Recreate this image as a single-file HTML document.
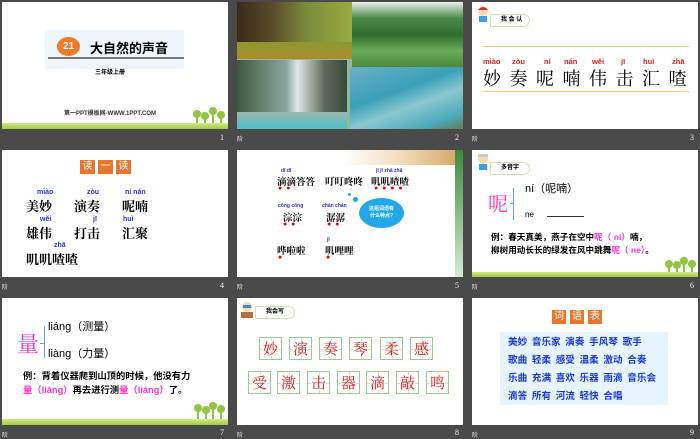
<!DOCTYPE html>
<html><head><meta charset="utf-8"><style>
*{margin:0;padding:0;box-sizing:border-box}
body{width:700px;height:438px;background:#4a4a4a;position:relative;overflow:hidden;font-family:"Liberation Sans","Noto Sans CJK SC",sans-serif}
.s{position:absolute;width:226px;height:127px;background:#fff;overflow:hidden}
.a{position:absolute;white-space:nowrap}
.n{position:absolute;color:#eee;font-size:8px;font-family:"Liberation Serif",serif}
.k{font-family:"Noto Serif CJK SC","Noto Sans CJK SC",serif;font-weight:bold}
.py{color:#2233dd;font-size:7px;font-weight:bold}
.ob{position:absolute;background:#e8762c;color:#fff;font-size:10px;text-align:center;width:15px;height:14px;line-height:14px}
.bar{position:absolute;left:0;bottom:0;width:226px;height:6px;background:linear-gradient(#d6e98e,#9ccc3c)}
.tr{position:absolute;width:2px;background:#8dc63f}
.tr:before{content:"";position:absolute;left:-3px;top:-5px;width:8px;height:8px;border-radius:50%;background:#8dc63f}
.bd{position:absolute;height:13px;background:#fff;border:1px solid #cfe3b3;border-radius:0 7px 7px 0;font-size:6px;font-weight:bold;line-height:11px;padding-left:10px;width:40px}
.kid{position:absolute;width:14px;height:18px}
.box{position:absolute;width:23px;height:23px;border:1px solid #9acb8c;background:#fff;color:#e31b1b;font-size:15px;text-align:center;line-height:21px;font-family:"Noto Serif CJK SC",serif}
.box:before{content:"";position:absolute;left:50%;top:0;bottom:0;border-left:1px dashed #cde4c5}
.box:after{content:"";position:absolute;top:50%;left:0;right:0;border-top:1px dashed #cde4c5}
.box span{position:relative;z-index:1}
.dot{color:#e00;font-size:7px}
</style></head><body>

<!-- slide 1 -->
<div class="s" style="left:2px;top:2px">
<div class="a" style="left:43px;top:28px;width:139px;height:39px;background:#eef5fb"></div>
<div class="a" style="left:55px;top:35px;width:23px;height:19px;border-radius:50%;background:#ee7a2a;color:#fff;font-size:10px;font-weight:bold;text-align:center;line-height:19px">21</div>
<div class="a" style="left:88px;top:36px;font-size:13px;font-weight:bold">大自然的声音</div>
<div class="a" style="left:46px;top:55px;width:136px;height:2px;background:#777"></div>
<div class="a" style="left:93px;top:65px;font-size:6px;font-weight:bold">三年级上册</div>
<div class="a" style="left:62px;top:106px;font-size:6px;font-weight:bold;color:#333">第一PPT模板网-WWW.1PPT.COM</div>
<div class="tr" style="left:194px;top:113px;height:9px"></div><div class="tr" style="left:202px;top:115px;height:8px"></div><div class="tr" style="left:210px;top:110px;height:12px"></div><div class="tr" style="left:218px;top:114px;height:9px"></div>
<div class="bar"></div>
</div>
<div class="n" style="left:220px;top:133px">1</div>

<!-- slide 2 -->
<div class="s" style="left:237px;top:2px;background:#8fb8a0">
<div class="a" style="left:0;top:0;width:115px;height:57px;background:linear-gradient(90deg,#3a2a18 0%,#5a4a2a 30%,#7a8a3a 60%,#9aaa40 100%)"></div>
<div class="a" style="left:0;top:40px;width:115px;height:17px;background:linear-gradient(#8a9a30,#b08a2a)"></div>
<div class="a" style="left:0;top:58px;width:110px;height:69px;background:linear-gradient(90deg,#3c5a3a,#8aa8a0 45%,#dfe8e8 55%,#5a6a58 80%,#3a4a3a)"></div>
<div class="a" style="left:0;top:110px;width:110px;height:17px;background:linear-gradient(#9ab8b0,#4ac0c8)"></div>
<div class="a" style="left:115px;top:0;width:111px;height:65px;background:linear-gradient(#e8f0e8 0%,#4a8a4a 25%,#2e6e2e 50%,#6aaa5a 75%,#4a8a3a 100%)"></div>
<div class="a" style="left:113px;top:65px;width:113px;height:62px;background:linear-gradient(160deg,#6ab0c8,#3aa0b8 40%,#8ac8d0 60%,#4aa8b8 85%,#6a7a4a)"></div>
</div>
<div class="n" style="left:455px;top:133px">2</div><div class="n" style="left:237px;top:134px;font-size:6px">阶</div>

<!-- slide 3 -->
<div class="s" style="left:472px;top:2px">
<svg class="kid" style="left:4px;top:3px" viewBox="0 0 14 18"><circle cx="7" cy="6" r="5" fill="#f8d8b0"/><path d="M2 5Q7-1 12 5" fill="#c33"/><rect x="3" y="11" width="8" height="6" fill="#3aa0e0"/></svg>
<div class="bd" style="left:18px;top:12px">我 会 认</div>
<div class="a" style="left:11px;top:44px;width:206px;height:1px;background:#f3d36a"></div>
<div class="a" style="left:11px;top:89px;width:206px;height:1px;background:#f3d36a"></div>
<div class="a" style="left:11px;top:55px;width:206px;font-size:7.5px;font-weight:bold;color:#e31b1b"><span style="position:absolute;left:0">miào</span><span style="position:absolute;left:29px">zòu</span><span style="position:absolute;left:61px">ní</span><span style="position:absolute;left:81px">nán</span><span style="position:absolute;left:109px">wěi</span><span style="position:absolute;left:138px">jī</span><span style="position:absolute;left:160px">huì</span><span style="position:absolute;left:189px">zhā</span></div>
<div class="a k" style="left:11px;top:63px;font-size:18px;letter-spacing:8.5px;font-weight:normal">妙奏呢喃伟击汇喳</div>
</div>
<div class="n" style="left:690px;top:133px">3</div><div class="n" style="left:472px;top:134px;font-size:6px">阶</div>

<!-- slide 4 -->
<div class="s" style="left:2px;top:150px">
<div class="ob" style="left:78px;top:10px">读</div><div class="ob" style="left:96px;top:10px">一</div><div class="ob" style="left:114px;top:10px">读</div>
<div class="a py" style="left:35px;top:39px">miào</div><div class="a py" style="left:85px;top:39px">zòu</div><div class="a py" style="left:123px;top:39px">ní nán</div>
<div class="a k" style="left:24px;top:46px;font-size:13px">美妙</div><div class="a k" style="left:72px;top:46px;font-size:13px">演奏</div><div class="a k" style="left:120px;top:46px;font-size:13px">呢喃</div>
<div class="a py" style="left:38px;top:66px">wěi</div><div class="a py" style="left:91px;top:66px">jī</div><div class="a py" style="left:121px;top:66px">huì</div>
<div class="a k" style="left:24px;top:73px;font-size:13px">雄伟</div><div class="a k" style="left:72px;top:73px;font-size:13px">打击</div><div class="a k" style="left:120px;top:73px;font-size:13px">汇聚</div>
<div class="a py" style="left:52px;top:92px">zhā</div>
<div class="a k" style="left:24px;top:99px;font-size:13px">叽叽喳喳</div>
</div>
<div class="n" style="left:220px;top:281px">4</div><div class="n" style="left:2px;top:282px;font-size:6px">阶</div>

<!-- slide 5 -->
<div class="s" style="left:237px;top:150px">
<div class="a" style="left:105px;top:0;width:115px;height:15px;background:linear-gradient(90deg,#fff,#f2dcc0 50%,#d8a868)"></div>
<div class="a" style="left:218px;top:0;width:8px;height:127px;background:linear-gradient(#3a8a3a,#d8ead8)"></div>
<div class="a py" style="left:44px;top:18px;font-size:5px">dī dī</div>
<div class="a k" style="left:40px;top:24px;font-size:9.5px">滴滴答答</div>
<div class="a k" style="left:88px;top:24px;font-size:9.5px">叮叮咚咚</div>
<div class="a py" style="left:139px;top:18px;font-size:5px">jī jī zhā zhā</div>
<div class="a k" style="left:134px;top:24px;font-size:9.5px">叽叽喳喳</div>
<div class="a dot" style="left:41px;top:35px">●&nbsp;&nbsp;●</div>
<div class="a dot" style="left:137px;top:35px">●&nbsp;&nbsp;●&nbsp;&nbsp;●&nbsp;&nbsp;●</div>
<div class="a py" style="left:41px;top:53px;font-size:5px">cōng cōng</div>
<div class="a k" style="left:46px;top:60px;font-size:9.5px">淙淙</div>
<div class="a py" style="left:85px;top:53px;font-size:5px">chán chán</div>
<div class="a k" style="left:89px;top:60px;font-size:9.5px">潺潺</div>
<div class="a dot" style="left:46px;top:71px">●&nbsp;&nbsp;●</div><div class="a dot" style="left:90px;top:71px">●&nbsp;&nbsp;●</div>
<div class="a" style="left:122px;top:48px;width:45px;height:30px;border-radius:50%;background:#22a8e8;color:#fff;font-size:5px;text-align:center;padding-top:8px;line-height:7px;font-weight:bold">这组词语有<br>什么特点?</div>
<div class="a" style="left:116px;top:47px;width:5px;height:5px;border-radius:50%;background:#22a8e8"></div>
<div class="a" style="left:111px;top:43px;width:3px;height:3px;border-radius:50%;background:#22a8e8"></div>
<div class="a k" style="left:40px;top:93px;font-size:9.5px">哗啦啦</div>
<div class="a py" style="left:90px;top:87px;font-size:5px">jī</div>
<div class="a k" style="left:88px;top:93px;font-size:9.5px">叽哩哩</div>
<div class="a dot" style="left:41px;top:104px">●</div><div class="a dot" style="left:89px;top:104px">●</div>
</div>
<div class="n" style="left:455px;top:281px">5</div><div class="n" style="left:237px;top:282px;font-size:6px">阶</div>

<!-- slide 6 -->
<div class="s" style="left:472px;top:150px">
<svg class="kid" style="left:4px;top:3px" viewBox="0 0 14 18"><circle cx="7" cy="6" r="5" fill="#f8d8b0"/><rect x="2" y="1" width="10" height="3" fill="#ccc"/><rect x="3" y="11" width="8" height="6" fill="#3aa0e0"/></svg>
<div class="bd" style="left:18px;top:12px">多音字</div>
<div class="a" style="left:16px;top:38px;font-size:20px;color:#ff33cc;font-family:'Noto Serif CJK SC',serif">呢</div>
<div class="a" style="left:41px;top:38px;width:1px;height:32px;background:#6aa0d8"></div>
<div class="a" style="left:38px;top:53px;width:4px;height:1px;background:#6aa0d8"></div>
<div class="a" style="left:53px;top:30px;font-size:11px">ní（呢喃）</div>
<div class="a" style="left:53px;top:60px;font-size:8px">ne</div>
<div class="a" style="left:75px;top:66px;width:37px;height:1px;background:#333"></div>
<div class="a" style="left:19px;top:81px;font-size:8.6px;font-weight:bold;line-height:13px">例：春天真美，燕子在空中<span style="color:#f3c">呢（ ní）</span>喃，<br>柳树用动长长的绿发在风中跳舞<span style="color:#f3c">呢（ ne）</span>。</div>
<div class="tr" style="left:196px;top:115px;height:8px"></div><div class="tr" style="left:204px;top:116px;height:7px"></div><div class="tr" style="left:211px;top:112px;height:11px"></div><div class="tr" style="left:219px;top:115px;height:8px"></div>
<div class="bar" style="height:5px"></div>
</div>
<div class="n" style="left:690px;top:281px">6</div><div class="n" style="left:472px;top:282px;font-size:6px">阶</div>

<!-- slide 7 -->
<div class="s" style="left:2px;top:298px">
<div class="a" style="left:15px;top:30px;font-size:22px;color:#ff33cc;font-family:'Noto Serif CJK SC',serif">量</div>
<div class="a" style="left:42px;top:28px;width:1px;height:32px;background:#6aa0d8"></div>
<div class="a" style="left:38px;top:45px;width:4px;height:1px;background:#6aa0d8"></div>
<div class="a" style="left:46px;top:20px;font-size:11px">liáng（测量）</div>
<div class="a" style="left:46px;top:47px;font-size:11px">liàng（力量）</div>
<div class="a" style="left:21px;top:71px;font-size:9.3px;font-weight:bold;line-height:14px">例：背着仪器爬到山顶的时候，他没有力<br><span style="color:#f3c">量（liàng）</span>再去进行测<span style="color:#f3c">量（liáng）</span>了。</div>
<div class="tr" style="left:195px;top:111px;height:10px"></div><div class="tr" style="left:203px;top:113px;height:9px"></div><div class="tr" style="left:210px;top:109px;height:13px"></div><div class="tr" style="left:218px;top:112px;height:10px"></div>
<div class="bar"></div>
</div>
<div class="n" style="left:220px;top:428px">7</div><div class="n" style="left:2px;top:430px;font-size:6px">阶</div>

<!-- slide 8 -->
<div class="s" style="left:237px;top:298px">
<svg class="kid" style="left:3px;top:3px" viewBox="0 0 14 18"><circle cx="7" cy="6" r="5" fill="#f8d8b0"/><rect x="3" y="4" width="8" height="3" fill="#3a8acc"/><rect x="1" y="11" width="12" height="6" fill="#b07040"/></svg>
<div class="bd" style="left:18px;top:8px">我会写</div>
<div class="box" style="left:22px;top:39px"><span>妙</span></div><div class="box" style="left:52px;top:39px"><span>演</span></div><div class="box" style="left:82px;top:39px"><span>奏</span></div><div class="box" style="left:112px;top:39px"><span>琴</span></div><div class="box" style="left:143px;top:39px"><span>柔</span></div><div class="box" style="left:173px;top:39px"><span>感</span></div>
<div class="box" style="left:11px;top:73px"><span>受</span></div><div class="box" style="left:40px;top:73px"><span>激</span></div><div class="box" style="left:70px;top:73px"><span>击</span></div><div class="box" style="left:100px;top:73px"><span>器</span></div><div class="box" style="left:129px;top:73px"><span>滴</span></div><div class="box" style="left:159px;top:73px"><span>敲</span></div><div class="box" style="left:189px;top:73px"><span>鸣</span></div>
</div>
<div class="n" style="left:455px;top:428px">8</div><div class="n" style="left:237px;top:430px;font-size:6px">阶</div>

<!-- slide 9 -->
<div class="s" style="left:472px;top:298px">
<div class="ob" style="left:80px;top:12px;width:14px">词</div><div class="ob" style="left:98px;top:12px;width:14px">语</div><div class="ob" style="left:116px;top:12px;width:14px">表</div>
<div class="a" style="left:28px;top:34px;width:168px;height:73px;background:#e6f5fd"></div>
<div class="a" style="left:36px;top:36px;font-size:9.6px;font-weight:bold;color:#1a3ad8;line-height:18px;word-spacing:2px">美妙 音乐家 演奏 手风琴 歌手<br>歌曲 轻柔 感受 温柔 激动 合奏<br>乐曲 充满 喜欢 乐器 雨滴 音乐会<br>滴答 所有 河流 轻快 合唱</div>
</div>
<div class="n" style="left:690px;top:428px">9</div><div class="n" style="left:472px;top:430px;font-size:6px">阶</div>

</body></html>
